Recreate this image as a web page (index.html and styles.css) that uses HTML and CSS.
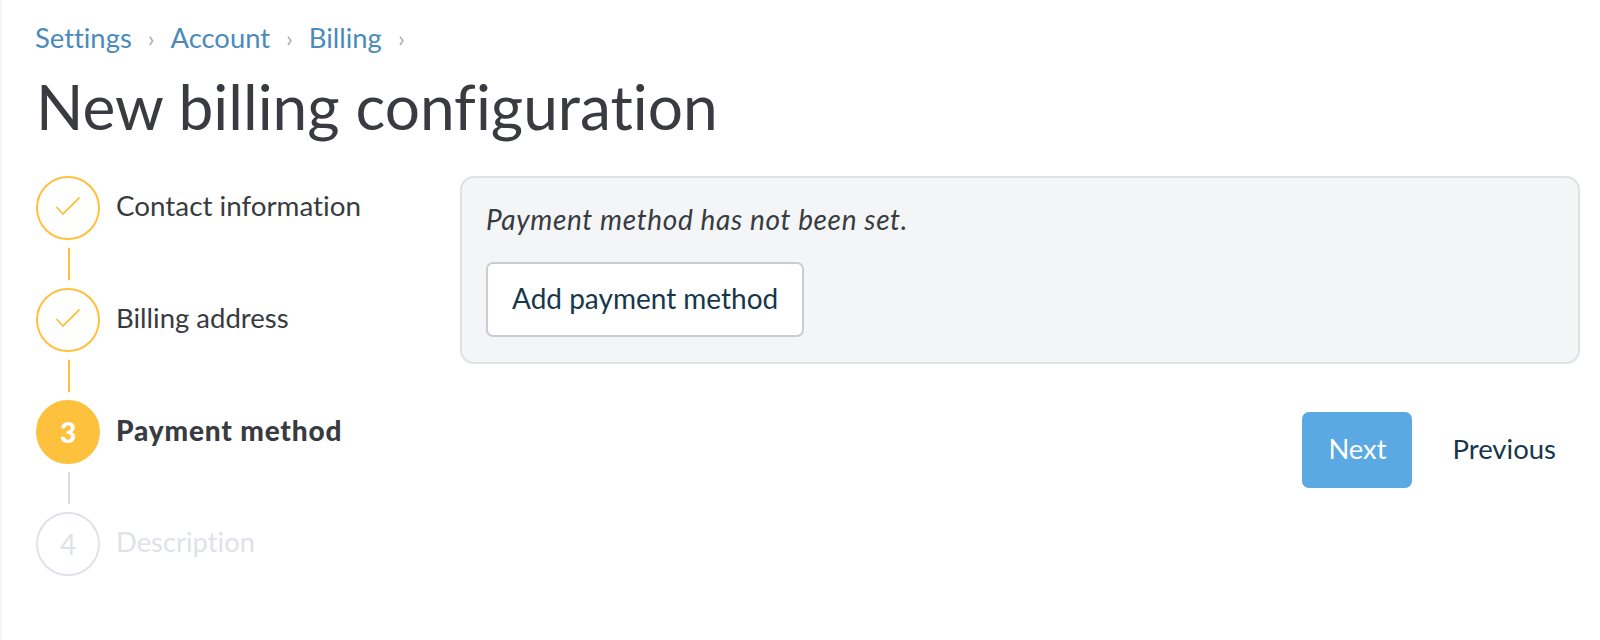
FILE: index.html
```html
<!DOCTYPE html>
<html lang="en">
<head>
<meta charset="utf-8">
<title>New billing configuration</title>
<link rel="stylesheet" href="styles.css">
</head>
<body>
<nav class="crumbs">
  <a class="crumb">Settings</a><span class="sep">›</span>
  <a class="crumb">Account</a><span class="sep">›</span>
  <a class="crumb">Billing</a><span class="sep">›</span>
</nav>
<h1 class="title">New billing configuration</h1>
<div class="layout">
  <ol class="steps">
    <li class="step done">
      <div class="rail">
        <span class="dot"><svg class="check" width="26" height="22" viewBox="0 0 26 22"><path d="M1.5 10 L8 17 L24.5 0.5" fill="none" stroke="currentColor" stroke-width="1.8"/></svg></span>
        <span class="link"></span>
      </div>
      <span class="label">Contact information</span>
    </li>
    <li class="step done">
      <div class="rail">
        <span class="dot"><svg class="check" width="26" height="22" viewBox="0 0 26 22"><path d="M1.5 10 L8 17 L24.5 0.5" fill="none" stroke="currentColor" stroke-width="1.8"/></svg></span>
        <span class="link"></span>
      </div>
      <span class="label label-short">Billing address</span>
    </li>
    <li class="step current">
      <div class="rail">
        <span class="dot">3</span>
        <span class="link"></span>
      </div>
      <span class="label">Payment method</span>
    </li>
    <li class="step todo">
      <div class="rail">
        <span class="dot">4</span>
      </div>
      <span class="label">Description</span>
    </li>
  </ol>
  <main class="content">
    <section class="panel">
      <p class="note">Payment method has not been set.</p>
      <button class="btn btn-outline" type="button">Add payment method</button>
    </section>
    <div class="actions">
      <button class="btn btn-primary" type="button">Next</button>
      <button class="btn btn-plain" type="button">Previous</button>
    </div>
  </main>
</div>
</body>
</html>
```
FILE: styles.css
```css
* { box-sizing: border-box; }
html, body { height: 100%; }
body {
  margin: 0;
  padding: 20px 20px 0 36px;
  background: #fff;
  color: #383b3f;
  font-family: Lato, "Open Sans", sans-serif;
  font-size: 28px;
  font-variant-ligatures: none;
  overflow: hidden;
  box-shadow: inset 2px 0 0 #f7f7f8;
}
.crumbs { display: flex; align-items: center; height: 36px; margin-left: -1px; margin-top: -1px; color: #4a8bbb; }
.crumb { font-size: 27.4px; }
.sep { margin: 0 16px; color: #a9b0b6; font-size: 24px; }
.title { margin: 11px 0 0; height: 90px; font-size: 62.2px; line-height: 80px; font-weight: 400; color: #383b3f; }
.layout { display: flex; margin-top: 20px; }
.steps { list-style: none; margin: 0; padding: 0; width: 424px; flex: none; }
.step { display: flex; gap: 16px; height: 112px; }
.rail { display: flex; flex-direction: column; align-items: center; width: 64px; }
.dot {
  display: flex; align-items: center; justify-content: center;
  width: 64px; height: 64px; border-radius: 50%;
  border: 2px solid #fec13d; color: #fec13d; font-size: 28px; flex: none;
}
.link { width: 2px; height: 32px; margin-top: 8px; margin-left: 2px; background: #fec13d; }
.label { line-height: 60px; font-size: 27.8px; color: #383b3f; }
.label-short { font-size: 27.5px; }
.current .dot { background: #fec13d; color: #fff; font-weight: 900; }
.current .link { background: #d9dce1; }
.current .label { font-weight: 900; font-size: 28px; letter-spacing: 0.84px; }
.todo .dot { border-color: #dfe2e6; color: #dfe2e6; }
.todo .label { color: #dfe2e6; font-size: 27.4px; }
.content { flex: 1; display: flex; flex-direction: column; }
.panel {
  height: 188px; padding: 23px 24px 0;
  background: #f4f5f7; border: 2px solid #dfe1e5; border-radius: 14px;
}
.note { margin: 0 0 25px; font-style: italic; font-size: 28px; letter-spacing: 0.64px; line-height: 36px; color: #383b3f; }
.btn { font-family: inherit; font-size: 28px; border-radius: 7px; cursor: pointer; }
.btn-outline {
  height: 75px; padding: 0 24px 4px; background: #fff;
  border: 2px solid #c8ccd3; color: #17374d;
}
.actions { display: flex; justify-content: flex-end; margin-top: 48px; gap: 16px; }
.btn-primary { width: 110px; height: 76px; padding: 0 0 4px; background: #5aa9e2; border: 0; color: #fff; font-size: 27.3px; }
.btn-plain { height: 76px; padding: 0 24px 4px; background: none; border: 0; color: #17374d; font-size: 27.5px; }
```
